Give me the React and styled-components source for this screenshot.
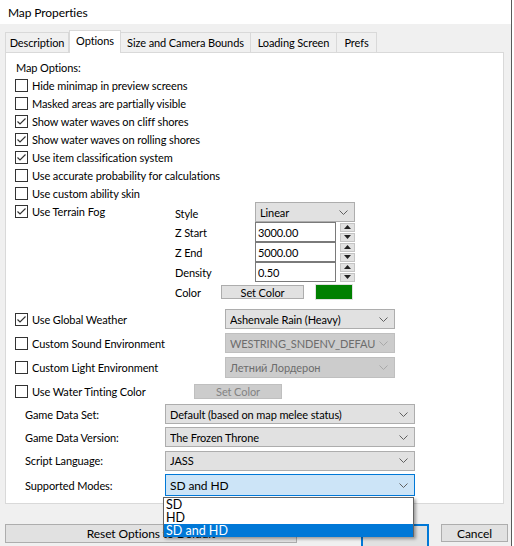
import React from "react";
import styled, { createGlobalStyle } from "styled-components";

const GlobalStyle = createGlobalStyle`
  html, body {
    margin: 0;
    padding: 0;
    background: #ffffff;
  }
  * {
    box-sizing: border-box;
  }
`;

const Window = styled.div`
  position: relative;
  width: 512px;
  height: 546px;
  background: #f0f0f0;
  border-right: 1px solid #5a5a5a;
  overflow: hidden;
  font-family: Lato, "Liberation Sans", Arial, sans-serif;
  font-size: 11px;
  letter-spacing: -0.1px;
  color: #000;
`;

const TitleBar = styled.div`
  height: 24px;
  background: #ffffff;
  padding-left: 8px;
  display: flex;
  align-items: center;
  font-size: 12px;
`;

const Body = styled.div`
  padding: 6px 0 0 5px;
`;

const TabRow = styled.div`
  display: flex;
  align-items: flex-end;
  height: 22px;
`;

const Tab = styled.div`
  position: relative;
  z-index: ${(p) => (p.$active ? 2 : 1)};
  width: ${(p) => p.$w}px;
  height: ${(p) => (p.$active ? 23 : 20)}px;
  margin-bottom: ${(p) => (p.$active ? -1 : 0)}px;
  background: ${(p) => (p.$active ? "#ffffff" : "#f0f0f0")};
  border: 1px solid #d9d9d9;
  border-bottom: none;
  border-left: ${(p) => (p.$first || p.$active ? "1px solid #d9d9d9" : "none")};
  display: flex;
  align-items: ${(p) => (p.$active ? "flex-start" : "center")};
  padding-top: ${(p) => (p.$active ? 3 : 0)}px;
  justify-content: center;
  white-space: nowrap;
`;

const Panel = styled.div`
  width: 499px;
  height: 452px;
  background: #ffffff;
  border: 1px solid #d9d9d9;
  padding: 5px 0 0 9px;
`;

const SectionLabel = styled.div`
  height: 18px;
  display: flex;
  align-items: center;
  padding-left: 1px;
`;

const CheckRow = styled.div`
  height: 18px;
  display: flex;
  align-items: center;
  gap: 4px;
  white-space: nowrap;
`;

const Box = styled.span`
  width: 13px;
  height: 13px;
  border: 1px solid #333333;
  background: #ffffff;
  display: inline-flex;
  align-items: center;
  justify-content: center;
  flex-shrink: 0;
`;

const FogBlock = styled.div`
  display: flex;
`;

const FogLeft = styled.div`
  width: 160px;
`;

const FogControls = styled.div`
  display: flex;
  flex-direction: column;
`;

const FogRow = styled.div`
  height: 20px;
  display: flex;
  align-items: center;
`;

const FogLabel = styled.div`
  width: ${(p) => p.$w || 80}px;
  padding-top: ${(p) => (p.$down ? 3 : 0)}px;
`;

const SelectBox = styled.div`
  width: ${(p) => p.$w}px;
  height: ${(p) => p.$h || 20}px;
  display: flex;
  align-items: center;
  justify-content: space-between;
  gap: 4px;
  padding: 0 6px 0 4px;
  background: ${(p) =>
    p.$focus ? "#cce4f7" : p.$disabled ? "#cccccc" : "#e1e1e1"};
  border: 1px solid
    ${(p) => (p.$focus ? "#0078d7" : p.$disabled ? "#bfbfbf" : "#adadad")};
  color: ${(p) => (p.$disabled ? "#6d6d6d" : "#000")};
  font-size: ${(p) => (p.$focus ? 12 : 11)}px;
  flex-shrink: 0;
`;

const SelectText = styled.span`
  overflow: hidden;
  white-space: nowrap;
  flex: 1;
`;

const NumberInput = styled.div`
  width: 81px;
  height: 20px;
  border: 1px solid #7a7a7a;
  background: #ffffff;
  display: flex;
  align-items: center;
  padding-left: 2px;
`;

const Spinner = styled.div`
  width: 15px;
  height: 19px;
  margin-left: 4px;
  display: flex;
  flex-direction: column;
  gap: 1px;
`;

const SpinHalf = styled.div`
  flex: 1;
  background: #e1e1e1;
  border: 1px solid #c4c4c4;
  display: flex;
  align-items: center;
  justify-content: center;
`;

const Button = styled.div`
  width: ${(p) => p.$w}px;
  height: ${(p) => p.$h}px;
  margin-left: ${(p) => p.$ml || 0}px;
  display: flex;
  align-items: center;
  justify-content: center;
  background: ${(p) => (p.$disabled ? "#cccccc" : "#e1e1e1")};
  border: ${(p) =>
    p.$default
      ? "2px solid #0078d7"
      : p.$disabled
      ? "1px solid #bfbfbf"
      : "1px solid #adadad"};
  color: ${(p) => (p.$disabled ? "#838383" : "#000")};
  font-size: ${(p) => p.$fs || 11}px;
  white-space: nowrap;
  overflow: hidden;
  flex-shrink: 0;
`;

const Swatch = styled.div`
  width: 38px;
  height: 16px;
  margin-left: 11px;
  background: #008000;
  border: 1px solid #e0e0e0;
`;

const EnvSection = styled.div`
  margin-top: 5px;
  display: flex;
  flex-direction: column;
`;

const EnvRow = styled.div`
  height: 24px;
  display: flex;
  align-items: center;
`;

const EnvLeft = styled.div`
  width: ${(p) => p.$w}px;
`;

const GameSection = styled.div`
  margin-top: 1px;
  display: flex;
  flex-direction: column;
  gap: 3.4px;
`;

const GameRow = styled.div`
  display: flex;
  align-items: center;
`;

const GameLabel = styled.div`
  width: 150px;
  padding-left: 10px;
`;

const ButtonBar = styled.div`
  display: flex;
  align-items: flex-start;
  margin-top: 20px;
`;

const DropList = styled.div`
  position: absolute;
  left: 163px;
  top: 497px;
  width: 251px;
  height: 40px;
  background: #ffffff;
  border: 1px solid #646464;
  box-shadow: 2px 2px 3px rgba(0, 0, 0, 0.35);
  display: flex;
  flex-direction: column;
  z-index: 5;
`;

const DropItem = styled.div`
  height: 13px;
  line-height: 13px;
  font-size: 12.5px;
  letter-spacing: 0;
  padding-left: 2px;
  background: ${(p) => (p.$selected ? "#0078d7" : "transparent")};
  color: ${(p) => (p.$selected ? "#ffffff" : "#000")};
`;

const Chevron = ({ color = "#606060" }) => (
  <svg width="9" height="5" viewBox="0 0 9 5">
    <polyline points="0.5,0.5 4.5,4.5 8.5,0.5" fill="none" stroke={color} strokeWidth="1" />
  </svg>
);

const Check = ({ checked }) => (
  <Box>
    {checked && (
      <svg width="11" height="11" viewBox="0 0 11 11">
        <polyline points="1.5,5.5 4,8 9.5,2.5" fill="none" stroke="#333" strokeWidth="1.2" />
      </svg>
    )}
  </Box>
);

const CheckItem = ({ checked, label }) => (
  <CheckRow>
    <Check checked={checked} />
    <span>{label}</span>
  </CheckRow>
);

const Select = ({ value, w, h, disabled, focus }) => (
  <SelectBox $w={w} $h={h} $disabled={disabled} $focus={focus}>
    <SelectText>{value}</SelectText>
    <Chevron color={disabled ? "#a8a8a8" : "#606060"} />
  </SelectBox>
);

const Arrow = ({ up }) => (
  <svg width="7" height="4" viewBox="0 0 7 4">
    <polygon points={up ? "0,4 3.5,0 7,4" : "0,0 3.5,4 7,0"} fill="#222" />
  </svg>
);

const NumberField = ({ value }) => (
  <>
    <NumberInput>{value}</NumberInput>
    <Spinner>
      <SpinHalf>
        <Arrow up />
      </SpinHalf>
      <SpinHalf>
        <Arrow />
      </SpinHalf>
    </Spinner>
  </>
);

const tabs = [
  { label: "Description", w: 64 },
  { label: "Options", w: 52, active: true },
  { label: "Size and Camera Bounds", w: 130 },
  { label: "Loading Screen", w: 86 },
  { label: "Prefs", w: 40 },
];

const options = [
  ["Hide minimap in preview screens", false],
  ["Masked areas are partially visible", false],
  ["Show water waves on cliff shores", true],
  ["Show water waves on rolling shores", true],
  ["Use item classification system", true],
  ["Use accurate probability for calculations", false],
  ["Use custom ability skin", false],
];

const gameRows = [
  ["Game Data Set:", "Default (based on map melee status)"],
  ["Game Data Version:", "The Frozen Throne"],
  ["Script Language:", "JASS"],
];

export default function App() {
  return (
    <>
      <GlobalStyle />
      <Window>
        <TitleBar>Map Properties</TitleBar>
        <Body>
          <TabRow>
            {tabs.map((t, i) => (
              <Tab key={t.label} $w={t.w} $active={t.active} $first={i === 0}>
                {t.label}
              </Tab>
            ))}
          </TabRow>
          <Panel>
            <SectionLabel>Map Options:</SectionLabel>
            {options.map(([label, checked]) => (
              <CheckItem key={label} label={label} checked={checked} />
            ))}
            <FogBlock>
              <FogLeft>
                <CheckItem label="Use Terrain Fog" checked />
              </FogLeft>
              <FogControls>
                <FogRow>
                  <FogLabel $down>Style</FogLabel>
                  <Select value="Linear" w={100} />
                </FogRow>
                <FogRow>
                  <FogLabel>Z Start</FogLabel>
                  <NumberField value="3000.00" />
                </FogRow>
                <FogRow>
                  <FogLabel>Z End</FogLabel>
                  <NumberField value="5000.00" />
                </FogRow>
                <FogRow>
                  <FogLabel>Density</FogLabel>
                  <NumberField value="0.50" />
                </FogRow>
                <FogRow>
                  <FogLabel $w={46}>Color</FogLabel>
                  <Button $w={83} $h={14}>Set Color</Button>
                  <Swatch />
                </FogRow>
              </FogControls>
            </FogBlock>
            <EnvSection>
              <EnvRow>
                <EnvLeft $w={210}>
                  <CheckItem label="Use Global Weather" checked />
                </EnvLeft>
                <Select value="Ashenvale Rain (Heavy)" w={170} />
              </EnvRow>
              <EnvRow>
                <EnvLeft $w={210}>
                  <CheckItem label="Custom Sound Environment" />
                </EnvLeft>
                <Select value="WESTRING_SNDENV_DEFAULT" w={170} disabled />
              </EnvRow>
              <EnvRow>
                <EnvLeft $w={210}>
                  <CheckItem label="Custom Light Environment" />
                </EnvLeft>
                <Select value="Летний Лордерон" w={170} h={21} disabled />
              </EnvRow>
              <EnvRow>
                <EnvLeft $w={179}>
                  <CheckItem label="Use Water Tinting Color" />
                </EnvLeft>
                <Button $w={88} $h={15} $disabled>
                  Set Color
                </Button>
              </EnvRow>
            </EnvSection>
            <GameSection>
              {gameRows.map(([label, value]) => (
                <GameRow key={label}>
                  <GameLabel>{label}</GameLabel>
                  <Select value={value} w={250} />
                </GameRow>
              ))}
              <GameRow>
                <GameLabel>Supported Modes:</GameLabel>
                <Select value="SD and HD" w={250} h={22} focus />
              </GameRow>
            </GameSection>
          </Panel>
          <ButtonBar>
            <Button $w={292} $h={19} $fs={12}>Reset Options to Default</Button>
            <Button $w={68} $h={24} $ml={64} $default />
            <Button $w={67} $h={18} $ml={12} $fs={12}>
              Cancel
            </Button>
          </ButtonBar>
        </Body>
        <DropList>
          <DropItem>SD</DropItem>
          <DropItem>HD</DropItem>
          <DropItem $selected>SD and HD</DropItem>
        </DropList>
      </Window>
    </>
  );
}
